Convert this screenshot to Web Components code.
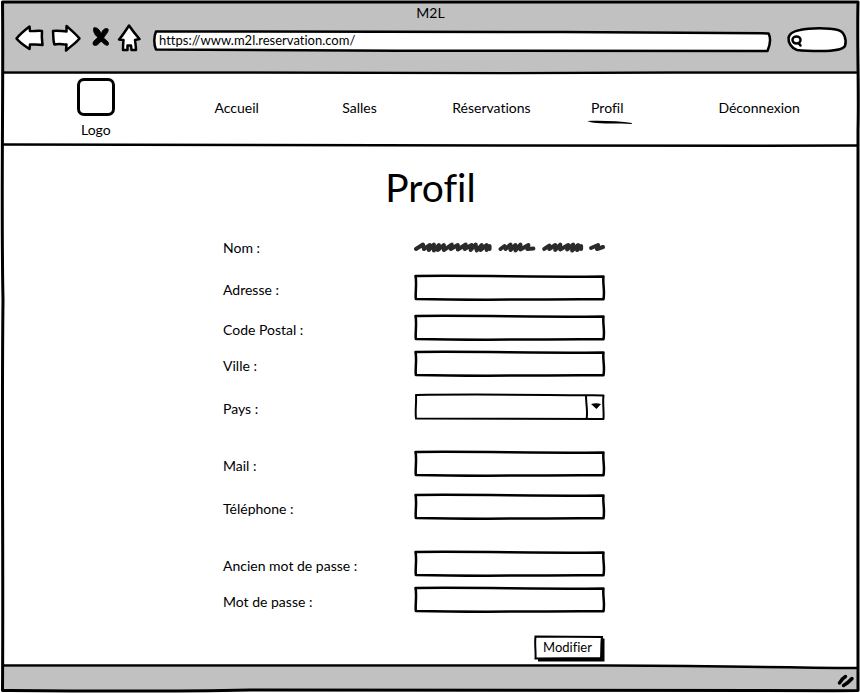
<!DOCTYPE html>
<html lang="fr">
<head>
<meta charset="utf-8">
<meta name="viewport" content="width=device-width, initial-scale=1">
<title>M2L</title>
<style>
  html, body { margin: 0; height: 100%; }
  body {
    --ink: #000;
    --bar: #c1c1c1;
    background: #fff;
    color: var(--ink);
    font: 14px/20px Lato, "Open Sans", sans-serif;
    font-variant-ligatures: none;
  }
</style>
</head>
<body>
<browser-window>
  <browser-toolbar slot="toolbar" heading="M2L" url="https://www.m2l.reservation.com/"></browser-toolbar>
  <site-nav slot="nav">
    <nav-link href="#accueil">Accueil</nav-link>
    <nav-link href="#salles">Salles</nav-link>
    <nav-link href="#reservations">Réservations</nav-link>
    <nav-link href="#profil" active>Profil</nav-link>
    <nav-link href="#deconnexion">Déconnexion</nav-link>
  </site-nav>
  <profile-page></profile-page>
</browser-window>

<script>
const define = (name, html, setup) => customElements.define(name, class extends HTMLElement {
  connectedCallback() {
    if (this.shadowRoot) return;
    const t = document.createElement('template');
    t.innerHTML = '<style>*{box-sizing:border-box}input,select,button{font:inherit;font-variant-ligatures:inherit;color:inherit;border:0;background:none;margin:0;padding:0;outline-offset:2px}</style>' + html;
    this.attachShadow({ mode: 'open' }).append(t.content.cloneNode(true));
    if (setup) setup(this, this.shadowRoot);
  }
});

/* Hand-drawn outlines; each stretches with its host while the stroke keeps its weight. */
const outlines = {
  field: ['0 0 192 27', 'M1.500 2 C60 1.300 120 3 190.500 2.600 C189.500 9 192 16 190.500 25.300 C130 24.600 90 26.800 1.800 25 C1.200 18 3 9 1.500 2Z', 2.5],
  select: ['0 0 192 27', 'M2 2 C60 1 130 1.8 190.500 2.4 C189.500 9 191 17 190.500 26 C120 25.6 60 26 2 25.6 C1 18 2.6 9 2 2Z M173 2 C172.500 10 175 17 173.500 26', 2],
  address: ['0 0 618 22', 'M3 1.5 C150 1 300 1.4 410 2 L615.500 3.400 C618 8 617 15 614.500 21 C450 22 200 20.500 3 19.500 C.5 14 1 6 3 1.500Z', 2.5],
  search: ['0 0 60 26', 'M13 4 C23 1.5 42 1.5 51 4 C57 5.500 60 13 58 20 C55 24.500 42 25 34 25 C25 25 14 24.500 10 24 C4 22 1 16 1.600 12 C2 8 7 5 13 4Z', 2.5]
};
define('sketch-box', `
  <style>
    :host { display: grid; position: relative; }
    svg { position: absolute; inset: 0; width: 100%; height: 100%; overflow: visible; }
    path { fill: #fff; stroke: var(--ink); stroke-linejoin: round; vector-effect: non-scaling-stroke; }
    slot { display: block; position: relative; min-width: 0; }
  </style>
  <svg preserveAspectRatio="none" aria-hidden="true"><path/></svg><slot></slot>`,
  (host, root) => {
    const [box, d, w] = outlines[host.getAttribute('outline')];
    root.querySelector('svg').setAttribute('viewBox', box);
    const p = root.querySelector('path');
    p.setAttribute('d', d);
    p.setAttribute('stroke-width', w);
  });

const rules = {
  top: 'M0 1.500 C200 1 300 2 500 2 C650 2 700 1 856 1.500',
  nav: 'M0 0.500 C200 1 350 .5 500 1.500 C640 2 740 2 856 1.500',
  foot: 'M0 1.500 C150 2 300 1.500 600 1.500 C700 1.500 740 3 856 4'
};
define('sketch-rule', `
  <style>
    :host { display: block; position: relative; height: 3px; }
    svg { display: block; width: 100%; height: 3px; overflow: visible; }
    .under { fill: #fff; }
    .line { fill: none; stroke: var(--ink); stroke-width: 2.500; vector-effect: non-scaling-stroke; }
  </style>
  <svg viewBox="0 0 856 3" preserveAspectRatio="none" aria-hidden="true"><path class="under"/><path class="line"/></svg>`,
  (host, root) => {
    const kind = host.getAttribute('kind');
    root.querySelector('.line').setAttribute('d', rules[kind]);
    /* The footer rule bends down over the grey bar, so the page colour follows it. */
    if (kind === 'foot') root.querySelector('.under').setAttribute('d', rules[kind] + ' V0 H0Z');
  });

define('browser-window', `
  <style>
    :host { display: flex; flex-direction: column; position: relative; min-height: 100%; box-sizing: border-box; padding: 3px 2px 3px 3px; }
    .frame { position: absolute; inset: 0; width: 100%; height: 100%; pointer-events: none; }
    .frame path { fill: none; stroke: var(--ink); stroke-width: 3; vector-effect: non-scaling-stroke; stroke-linejoin: round; }
    main { flex: 1; }
    footer { height: 23px; background: var(--bar); display: flex; justify-content: flex-end; align-items: center; padding: 4px 3px 0 0; }
  </style>
  <slot name="toolbar"></slot>
  <sketch-rule kind="top"></sketch-rule>
  <slot name="nav"></slot>
  <sketch-rule kind="nav"></sketch-rule>
  <main><slot></slot></main>
  <sketch-rule kind="foot"></sketch-rule>
  <footer>
    <svg width="18" height="16" viewBox="0 0 18 16" fill="none" stroke="#000" stroke-width="3.500" stroke-linecap="round" aria-hidden="true"><path d="M2.500 10 Q5 5.500 8.500 3.500 M6.500 12.500 Q11 10 15 5.500"/></svg>
  </footer>
  <svg class="frame" viewBox="0 0 860 693" preserveAspectRatio="none" aria-hidden="true">
    <path d="M2.500 2 C250 2.500 600 1.500 858 2 C857 40 859 90 858 130 C859 300 857.500 500 858 690.500 C640 692 420 689.500 250 690 C160 692 60 691 2.500 690.500 C3.500 560 1.500 430 3 300 C1 200 3.500 90 2.500 2Z"/>
  </svg>`);

define('browser-toolbar', `
  <style>
    :host { display: block; background: var(--bar); padding-bottom: 19px; }
    .title { text-align: center; line-height: 20px; padding-bottom: 1px; }
    .row { display: flex; align-items: flex-end; padding: 0 11px 0 12px; }
    .icons { display: flex; gap: 10px; margin-right: 12px; }
    button { display: block; }
    svg { display: block; overflow: visible; }
    .icons path { fill: #fff; stroke: #000; stroke-width: 2.500; stroke-linejoin: round; stroke-linecap: round; }
    .icons .cross { fill: #000; stroke-width: 1; }
    .url { flex: 1; height: 22px; margin-right: 16px; }
    .url input { width: 100%; height: 20px; padding: 0 6px; display: block; font-size: 13px; }
    .find { width: 60px; height: 26px; }
    .find label { position: relative; display: flex; align-items: center; height: 26px; padding: 4px 0 0 4px; }
    .find input { width: 36px; height: 18px; }
  </style>
  <div class="title"></div>
  <div class="row">
    <div class="icons">
      <button type="button" aria-label="Précédent"><svg width="28" height="28" viewBox="0 0 28 28"><path d="M1.500 14.500 C5 10 10 6 14.500 2.500 L15 7 C18 7.500 22 6.500 27 7 C26.500 12 27 17 27.500 21 C23 20 19 20.500 15 20.500 L14.500 25 C10 22 5 19 1.500 14.500Z"/></svg></button>
      <button type="button" aria-label="Suivant"><svg width="28" height="28" viewBox="0 0 28 28"><path d="M26.500 14.500 C23 10 18 6 13.500 2 L13.500 7.500 C9 7.500 5 6 0 7 C.5 12 0 17 1.500 20.500 C6 19.500 9 20.500 13.500 20.500 L13 26.500 C18 22 23 19 26.500 14.500Z"/></svg></button>
      <button type="button" aria-label="Arrêter"><svg width="18" height="28" viewBox="0 0 18 28"><path class="cross" d="M3 4 C6 3 9 6 10 10 C12 5 14 4 17 5 C18 8 14 11 12.500 14 C15 16 18 18 17.500 20.500 C16 23 12 19 10 17 C8 20 5 22.500 2.500 21 C1 18 4 16 7 13.500 C4 11 1.500 7 3 4Z"/></svg></button>
      <button type="button" aria-label="Accueil du navigateur"><svg width="22" height="28" viewBox="0 0 22 28"><path d="M10 1.500 C13 6 17 11 20.500 15 L16 16 C16.500 20 17 23 17 26 L12.500 26 L12 21.500 L8.500 21.500 L8.500 26 L4 26 C4 23 4 20 4.500 16 L0 15.500 C4 11 7 6 10 1.500Z"/></svg></button>
    </div>
    <sketch-box class="url" outline="address"><input type="text" aria-label="Adresse du site" spellcheck="false"></sketch-box>
    <sketch-box class="find" outline="search">
      <label><svg width="13" height="14" viewBox="0 0 13 14" fill="none" stroke="#000" stroke-width="2.500" stroke-linecap="round" aria-hidden="true"><ellipse cx="5.500" cy="6" rx="4" ry="3.500"/><path d="M7.500 9 L9.500 11.500"/></svg><input type="text" aria-label="Rechercher"></label>
    </sketch-box>
  </div>`,
  (host, root) => {
    root.querySelector('.title').textContent = host.getAttribute('heading');
    root.querySelector('.url input').value = host.getAttribute('url');
  });

define('site-nav', `
  <style>
    :host { display: block; }
    nav { display: grid; grid-template-columns: 186fr 96fr 150fr 114fr 118fr 186fr; align-items: center; justify-items: center; height: 70px; padding: 0 6px 2px 0; }
    .logo { display: grid; justify-items: center; gap: 4px; padding-top: 2px; }
    .mark { width: 38px; height: 38px; border: 3px solid var(--ink); border-radius: 7px; }
  </style>
  <nav><div class="logo"><span class="mark"></span><span>Logo</span></div><slot></slot></nav>`);

define('nav-link', `
  <style>
    :host { display: block; position: relative; }
    a { color: inherit; text-decoration: none; }
    svg { display: none; position: absolute; left: -4px; top: 22px; }
    :host([active]) svg { display: block; }
  </style>
  <a><slot></slot></a>
  <svg width="46" height="6" viewBox="0 0 46 6" aria-hidden="true"><path d="M0 1 C15 .5 32 1 45 3 L44.500 4 C30 3.500 16 4 5 2.500Z"/></svg>`,
  (host, root) => {
    const a = root.querySelector('a');
    a.href = host.getAttribute('href');
    if (host.hasAttribute('active')) a.setAttribute('aria-current', 'page');
  });

const rowStyle = `
    :host { display: grid; grid-template-columns: minmax(0, 1fr) minmax(0, 1fr); align-items: center; min-height: 27px; margin-bottom: var(--after, 0px); }
    .label { padding-top: 4px; }`;

define('text-field', `
  <style>${rowStyle}
    input { display: block; width: 100%; height: 27px; padding: 0 8px; }
  </style>
  <label class="label" for="f"></label>
  <sketch-box outline="field"><input id="f"></sketch-box>`,
  (host, root) => {
    root.querySelector('label').textContent = host.getAttribute('label');
    root.querySelector('input').type = host.getAttribute('type') || 'text';
  });

define('select-field', `
  <style>${rowStyle}
    select { display: block; width: 100%; height: 27px; padding: 0 24px 0 8px; appearance: none; }
    svg { position: absolute; right: 4px; top: 10px; pointer-events: none; }
  </style>
  <label class="label" for="f"></label>
  <sketch-box outline="select"><select id="f"><option value=""></option></select><svg width="10" height="6" viewBox="0 0 10 6" aria-hidden="true"><path d="M0 1 Q5 -.5 10 1 L5.500 6Z"/></svg></sketch-box>`,
  (host, root) => { root.querySelector('label').textContent = host.getAttribute('label'); });

define('scribble-field', `
  <style>${rowStyle}
    .label { padding: 0; }
    svg { display: block; width: 100%; height: 14px; }
    path { fill: none; stroke: #2b2b2b; stroke-width: 4; stroke-linejoin: round; stroke-linecap: round; }
  </style>
  <span class="label"></span>
  <svg viewBox="0 0 192 14" role="img" aria-label="Nom masqué"><path/></svg>`,
  (host, root) => {
    root.querySelector('.label').textContent = host.getAttribute('label');
    /* One wavy pen stroke per word: each pair is a crest and the trough after it. */
    const words = [
      [2, 8, [[9, 3.5], [10, 8], [16, 4], [15, 9], [20, 3.5], [20, 9.5], [25, 4], [24, 9], [30, 4], [30, 9], [38, 3.5], [37, 8], [44, 4], [44, 8.500], [52, 3.500], [51, 8], [58, 4], [57, 9], [62, 3.500], [63, 9.500], [68, 4], [67, 9], [73, 4], [73, 9], [76, 5], [76, 8]]],
      [87, 8, [[91, 5], [92, 8], [97, 3.5], [97, 9], [102, 4], [102, 9.5], [107, 3.500], [107, 8.500], [115, 4], [114, 8], [120, 7.500]]],
      [131, 8, [[136, 4.5], [136, 8], [142, 4], [142, 9], [147, 3.5], [147, 8.5], [155, 4], [154, 8.5], [160, 3.500], [159, 9.500], [165, 4], [164, 9], [168, 5], [168, 8]]],
      [178, 7, [[185, 4], [184, 8], [190, 6]]]
    ];
    root.querySelector('path').setAttribute('d', words.map(([x, y, pts]) =>
      'M' + x + ' ' + y + pts.map(p => ' L' + p.join(' ')).join('')).join(' '));
  });

define('submit-button', `
  <style>
    :host { display: flex; justify-content: flex-end; }
    button { position: relative; width: 71px; height: 27px; padding: 0 4px 4px 0; font-size: 13px; cursor: pointer; }
    svg { position: absolute; inset: 0; }
    span { position: relative; }
  </style>
  <button type="submit"><svg width="71" height="27" viewBox="0 0 71 27" aria-hidden="true"><path d="M4 5 L70.500 3.500 V26.500 H4Z"/><path d="M1.500 1.500 L68 2 C67 8 67.500 16 67 23 L1.500 23.500 C2 16 .5 9 1.500 1.500Z" fill="#fff" stroke="#000" stroke-width="2"/></svg><span><slot></slot></span></button>`);

define('profile-page', `
  <style>
    :host { display: grid; grid-template-columns: 220fr 382fr 253fr; padding: 16px 0 1px; }
    h1 { grid-column: 1 / -1; margin: 0 0 23px; font-size: 39px; line-height: 48px; font-weight: 400; text-align: center; }
    form { grid-column: 2; }
    .s { --after: 9px; } .m { --after: 13px; } .l { --after: 16px; } .xl { --after: 30px; } .end { --after: 22px; }
  </style>
  <h1>Profil</h1>
  <form onsubmit="return false">
    <scribble-field class="m" label="Nom :"></scribble-field>
    <text-field class="m" label="Adresse :"></text-field>
    <text-field class="s" label="Code Postal :"></text-field>
    <text-field class="l" label="Ville :"></text-field>
    <select-field class="xl" label="Pays :"></select-field>
    <text-field class="l" label="Mail :" type="email"></text-field>
    <text-field class="xl" label="Téléphone :" type="tel"></text-field>
    <text-field class="s" label="Ancien mot de passe :" type="password"></text-field>
    <text-field class="end" label="Mot de passe :" type="password"></text-field>
    <submit-button>Modifier</submit-button>
  </form>`);
</script>
</body>
</html>
